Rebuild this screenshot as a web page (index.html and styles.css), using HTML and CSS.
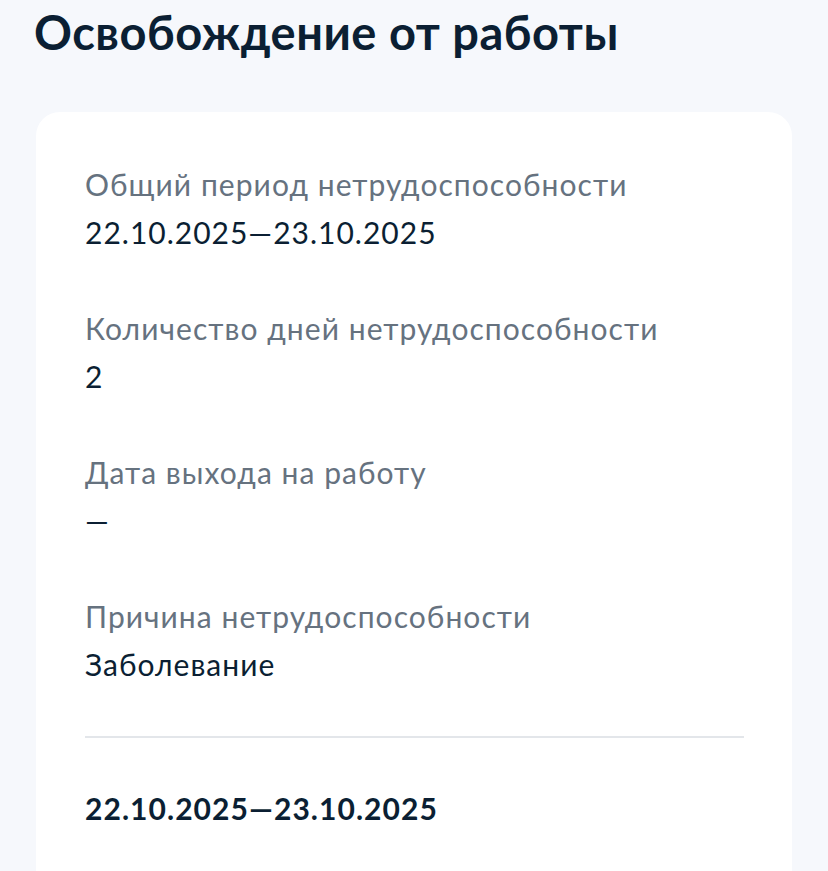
FILE: index.html
```html
<!DOCTYPE html>
<html lang="ru">
<head>
<meta charset="utf-8">
<link rel="stylesheet" href="styles.css">
</head>
<body>
<main class="page">
  <h1 class="title">Освобождение от работы</h1>
  <section class="card">
    <div class="field">
      <div class="label">Общий период нетрудоспособности</div>
      <div class="value">22.10.2025—23.10.2025</div>
    </div>
    <div class="field">
      <div class="label">Количество дней нетрудоспособности</div>
      <div class="value">2</div>
    </div>
    <div class="field">
      <div class="label">Дата выхода на работу</div>
      <div class="value">—</div>
    </div>
    <div class="field">
      <div class="label">Причина нетрудоспособности</div>
      <div class="value">Заболевание</div>
    </div>
    <hr class="divider">
    <div class="period">22.10.2025—23.10.2025</div>
  </section>
</main>
</body>
</html>
```
FILE: styles.css
```css
html, body {
  margin: 0;
  padding: 0;
  background: #f6f8fc;
}
body {
  font-family: Lato, "Noto Sans", sans-serif;
  color: #0b1f33;
}
.page {
  padding: 0 36px 0 34px;
}
.title {
  margin: 0;
  padding-top: 4px;
  font-size: 47px;
  line-height: 56px;
  letter-spacing: 0.5px;
  font-weight: 700;
  color: #0b1f33;
}
.card {
  margin-top: 52px;
  margin-left: 2px;
  background: #ffffff;
  border-radius: 24px;
  padding: 48px 48px 80px 49px;
  display: flex;
  flex-direction: column;
  gap: 48px;
}
.field {
  display: flex;
  flex-direction: column;
}
.label {
  font-size: 30px;
  line-height: 48px;
  letter-spacing: 1.05px;
  color: #66727f;
}
.value {
  font-size: 30px;
  line-height: 48px;
  letter-spacing: 1px;
  color: #0b1f33;
}
.divider {
  margin: 0 0 -2px;
  border: 0;
  height: 2px;
  background: #e3e6ea;
}
.period {
  font-size: 30px;
  line-height: 48px;
  letter-spacing: 1.05px;
  font-weight: 700;
  color: #0b1f33;
}
```
